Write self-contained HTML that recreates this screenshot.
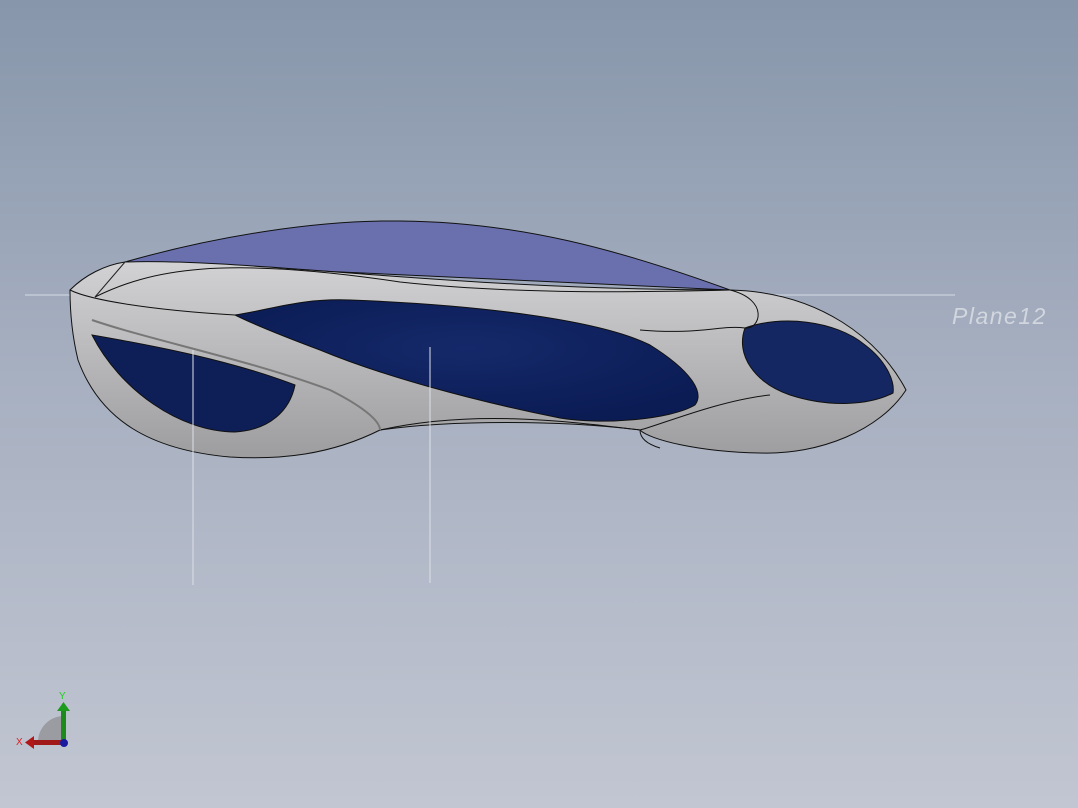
<!DOCTYPE html>
<html><head><style>
html,body{margin:0;padding:0;width:1078px;height:808px;overflow:hidden}
body{background:linear-gradient(#8796ab 0%,#a6afc0 45%,#c2c6d2 100%)}
</style></head><body>
<svg width="1078" height="808" viewBox="0 0 1078 808" style="position:absolute;left:0;top:0">
<defs>
<linearGradient id="g1" x1="0" y1="0" x2="0" y2="1"><stop offset="0" stop-color="#d2d2d4"/><stop offset="1" stop-color="#9d9d9f"/></linearGradient>
<radialGradient id="b1" cx="0.5" cy="0.4" r="0.6"><stop offset="0" stop-color="#15296a"/><stop offset="1" stop-color="#0b1c55"/></radialGradient>
</defs>
<line x1="25" y1="295" x2="955" y2="295" stroke="#d8dce4" stroke-width="1"/>
<text x="952" y="324" font-family="Liberation Sans,sans-serif" font-style="italic" font-size="23" letter-spacing="1.5" fill="#d2d6de">Plane12</text>
<path d="M125,262 C220,235 320,220 400,221 C520,222 620,250 730,290 L125,262Z" fill="#6a70ae" stroke="#111" stroke-width="1"/>
<path d="M70,290 C85,275 105,265 125,262 C250,258 450,290 730,290 C820,292 880,340 906,390 C880,430 820,455 760,453 C700,452 650,440 640,430 C560,420 450,420 380,430 C330,455 280,460 230,457 C150,450 100,420 78,360 C72,335 70,310 70,290Z" fill="url(#g1)" stroke="#111" stroke-width="1"/>
<path d="M95,297 C150,270 220,255 400,282 C520,295 650,292 730,290" fill="none" stroke="#111"/>
<path d="M70,290 C90,300 150,310 235,315" fill="none" stroke="#111"/>
<path d="M95,297 L125,262" fill="none" stroke="#222"/>
<path d="M235,315 C270,310 300,298 350,300 C480,305 600,320 650,345 C690,370 705,392 695,405 C670,420 600,425 560,418 C470,400 380,375 320,350 C280,335 255,325 235,315Z" fill="url(#b1)" stroke="#111"/>
<path d="M380,430 C470,410 560,420 640,430 C660,425 720,400 770,395" fill="none" stroke="#111"/>
<path d="M640,430 C640,440 650,445 660,448" fill="none" stroke="#111"/>
<path d="M92,335 C150,345 230,360 295,385 C290,410 270,430 235,432 C180,432 120,390 92,335Z" fill="#0e1f58" stroke="#111"/>
<path d="M92,320 C150,340 250,360 330,390 C360,405 380,420 380,430" fill="none" stroke="#777" stroke-width="2"/>
<path d="M745,328 C780,315 835,320 865,345 C885,360 895,380 893,393 C870,405 830,408 790,395 C755,383 735,355 745,328Z" fill="#142762" stroke="#111"/>
<path d="M730,290 C770,300 760,330 745,328 M640,330 C700,335 720,325 745,328" fill="none" stroke="#111"/>
<line x1="193" y1="350" x2="193" y2="585" stroke="#dde0e8"/>
<line x1="430" y1="347" x2="430" y2="583" stroke="#dde0e8"/>
<path d="M38,742 A26,26 0 0 1 63,716 L63,742Z" fill="#9a9ca2"/>
<rect x="61" y="709" width="5" height="34" fill="#1e8a1e"/>
<polygon points="57,711 63.5,702 70,711" fill="#1e9a1e"/>
<text x="59" y="699" font-family="Liberation Sans,sans-serif" font-size="10" fill="#2c2">Y</text>
<rect x="32" y="740" width="32" height="5" fill="#a01818"/>
<polygon points="34,736 25,742.5 34,749" fill="#b01818"/>
<text x="16" y="745" font-family="Liberation Sans,sans-serif" font-size="10" fill="#d22">X</text>
<circle cx="64" cy="743" r="4" fill="#1a1aa0"/>
</svg>
</body></html>
